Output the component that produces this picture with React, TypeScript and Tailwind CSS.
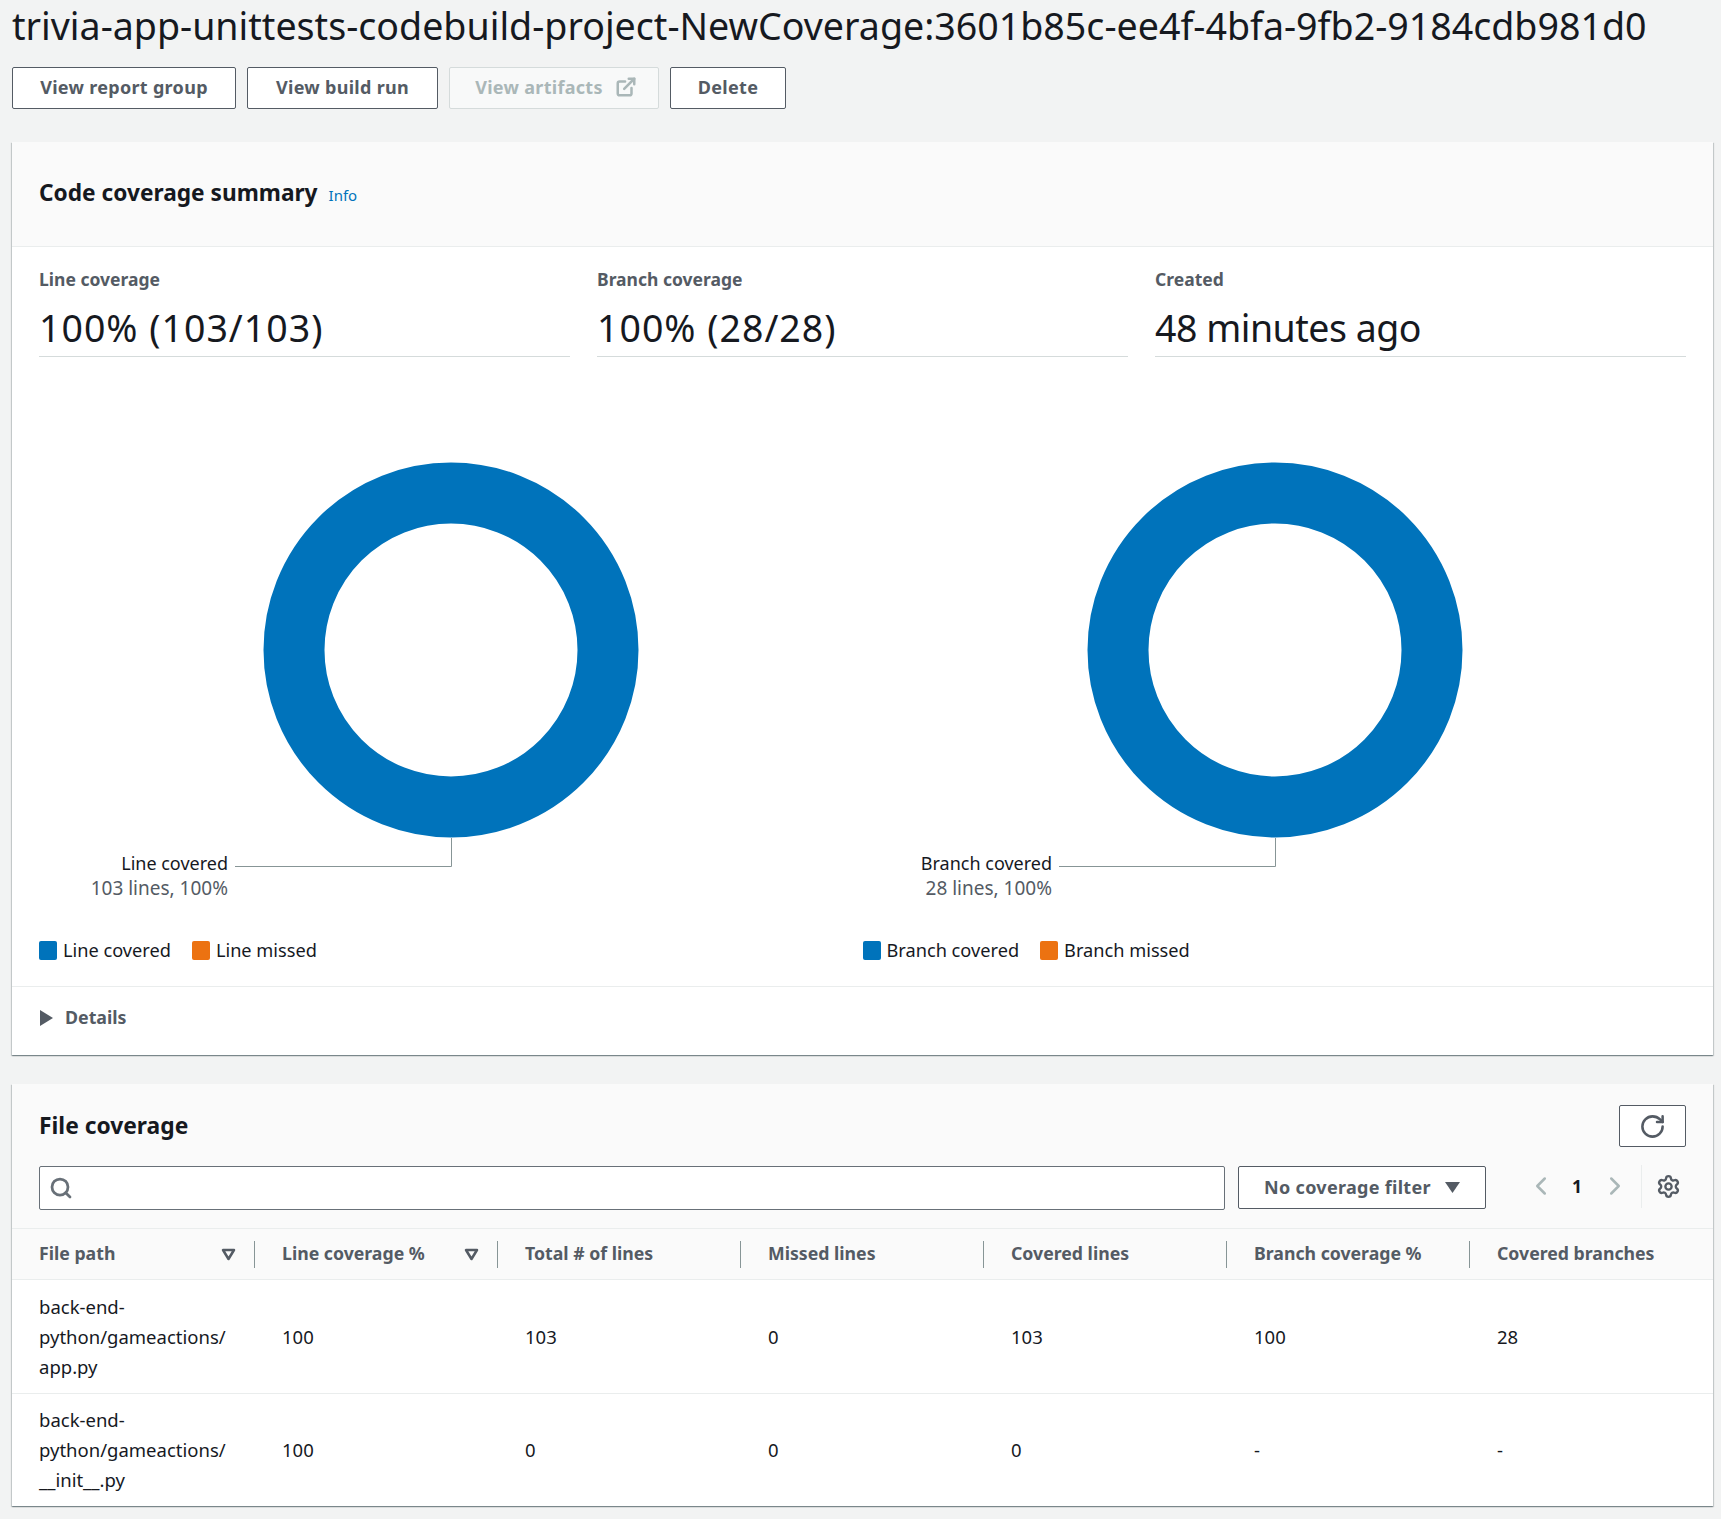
import { ExternalLink, RotateCw, Search, ChevronLeft, ChevronRight, Settings } from 'lucide-react'

function Button({ label, disabled, icon, className }: { label: string; disabled?: boolean; icon?: boolean; className?: string }) {
  return (
    <button
      className={`flex h-[42px] items-center justify-center gap-3 rounded-[2px] border pb-[2px] text-[18px] font-bold tracking-[0.3px] ${
        disabled ? 'border-[#d5dbdb] bg-[#f8f9f9] text-[#aab7b8]' : 'border-[#545b64] bg-white text-[#545b64]'
      } ${className}`}
    >
      {label}
      {icon && <ExternalLink size={22} strokeWidth={2.75} />}
    </button>
  )
}

function Stat({ label, value, className }: { label: string; value: string; className: string }) {
  return (
    <div className="border-b border-[#d5dbdb]">
      <div className="text-[17.5px] leading-[26px] font-bold text-[#545b64]">{label}</div>
      <div className={`mt-[12px] h-[52px] text-[37.5px] leading-[48px] text-[#16191f] ${className}`}>{value}</div>
    </div>
  )
}

function Donut({ label, detail }: { label: string; detail: string }) {
  return (
    <svg width="824" height="558" viewBox="0 0 824 558" className="block">
      <circle cx="412" cy="293" r="157" fill="none" stroke="#0073bb" strokeWidth="61" />
      <path d="M196 509.500H412.500V481" fill="none" stroke="#879596" strokeWidth="1" />
      <text x="189" y="513" textAnchor="end" fontSize="18" fill="#16191f">{label}</text>
      <text x="189" y="538" textAnchor="end" fontSize="19" fill="#545b64">{detail}</text>
    </svg>
  )
}

function Legend({ covered, missed }: { covered: string; missed: string }) {
  return (
    <div className="flex items-center gap-[21px] text-[18.200px] text-[#16191f]">
      <span className="flex items-center gap-[6px]">
        <span className="h-[19px] w-[18px] rounded-[2px] bg-[#0073bb]" />
        {covered}
      </span>
      <span className="flex items-center gap-[6px]">
        <span className="h-[19px] w-[18px] rounded-[2px] bg-[#ec7211]" />
        {missed}
      </span>
    </div>
  )
}

function FilterMark() {
  return (
    <svg width="15" height="13" viewBox="0 0 15 13" className="shrink-0">
      <path d="M2 2h11l-5.500 9z" fill="none" stroke="#545b64" strokeWidth="2.500" strokeLinejoin="round" />
    </svg>
  )
}

const headers = ['File path', 'Line coverage %', 'Total # of lines', 'Missed lines', 'Covered lines', 'Branch coverage %', 'Covered branches']

const rows = [
  { path: ['back-end-', 'python/gameactions/', 'app.py'], cells: ['100', '103', '0', '103', '100', '28'] },
  { path: ['back-end-', 'python/gameactions/', '__init__.py'], cells: ['100', '0', '0', '0', '-', '-'] },
]

export default function App() {
  return (
    <div className="h-[1519px] overflow-hidden bg-[#f2f3f3] px-[12px] font-['Noto_Sans',sans-serif] text-[#16191f]">
      <h1 className="h-[52px] text-[37.600px] leading-[52px] whitespace-nowrap">
        trivia-app-unittests-codebuild-project-NewCoverage:3601b85c-ee4f-4bfa-9fb2-9184cdb981d0
      </h1>

      <div className="mt-[15px] flex gap-[11px]">
        <Button label="View report group" className="w-[224px]" />
        <Button label="View build run" className="w-[191px]" />
        <Button label="View artifacts" disabled icon className="w-[210px] pl-[4px]" />
        <Button label="Delete" className="w-[116px]" />
      </div>

      {/* Summary card */}
      <section className="mt-[33px] w-[1701px] bg-white shadow-[0_1px_1px_0_rgba(0,28,36,0.3),1px_1px_1px_0_rgba(0,28,36,0.15),-1px_1px_1px_0_rgba(0,28,36,0.15)]">
        <header className="flex h-[105px] items-center gap-[11px] border-b border-[#eaeded] bg-[#fafafa] px-[27px] pb-[2px]">
          <h2 className="text-[22.700px] font-bold">Code coverage summary</h2>
          <a className="mt-[5px] text-[15px] text-[#0073bb]">Info</a>
        </header>

        <div className="grid grid-cols-3 gap-[27px] px-[27px] pt-[19px]">
          <Stat label="Line coverage" value="100% (103/103)" className="tracking-[1px]" />
          <Stat label="Branch coverage" value="100% (28/28)" className="tracking-[1px]" />
          <Stat label="Created" value="48 minutes ago" className="tracking-[-0.5px]" />
        </div>

        <div className="grid grid-cols-2 px-[27px]">
          <div>
            <Donut label="Line covered" detail="103 lines, 100%" />
            <div className="mt-[22px]">
              <Legend covered="Line covered" missed="Line missed" />
            </div>
          </div>
          <div>
            <Donut label="Branch covered" detail="28 lines, 100%" />
            <div className="mt-[22px]">
              <Legend covered="Branch covered" missed="Branch missed" />
            </div>
          </div>
        </div>

        <div className="mt-[22px] flex h-[69px] items-center gap-[12px] border-t border-[#eaeded] pr-[27px] pb-[8px] pl-[28px] text-[17.800px] font-bold text-[#545b64]">
          <svg width="13" height="16" viewBox="0 0 13 16" className="mt-[2px]"><path d="M0 0l13 8L0 16z" fill="#545b64" /></svg>
          Details
        </div>
      </section>

      {/* File coverage card */}
      <section className="mt-[29px] w-[1701px] bg-white shadow-[0_1px_1px_0_rgba(0,28,36,0.3),1px_1px_1px_0_rgba(0,28,36,0.15),-1px_1px_1px_0_rgba(0,28,36,0.15)]">
        <div className="bg-[#fafafa] px-[27px] pt-[21px]">
          <div className="flex h-[42px] items-center justify-between">
            <h2 className="text-[22.800px] font-bold">File coverage</h2>
            <button className="flex h-[42px] w-[67px] items-center justify-center rounded-[2px] border border-[#545b64] bg-white text-[#545b64]">
              <RotateCw size={27} strokeWidth={2.25} />
            </button>
          </div>
          <div className="mt-[19px] flex h-[62px] items-start">
            <div className="flex h-[44px] w-[1186px] items-center rounded-[2px] border border-[#687078] bg-white pl-[9px] text-[#687078]">
              <Search size={24} strokeWidth={2.75} />
            </div>
            <button className="ml-[13px] flex h-[43px] w-[248px] items-center justify-center gap-[14px] rounded-[2px] border border-[#545b64] bg-white text-[18px] font-bold tracking-[0.3px] text-[#545b64]">
              No coverage filter
              <svg width="15" height="11" viewBox="0 0 15 11"><path d="M0 0h15L7.500 11z" fill="#545b64" /></svg>
            </button>
            <div className="ml-[40px] flex h-[40px] items-center text-[#aab7b8]">
              <ChevronLeft size={30} strokeWidth={2} />
              <span className="mr-[18px] ml-[16px] w-[10px] text-center text-[17.500px] font-bold text-[#16191f]">1</span>
              <ChevronRight size={30} strokeWidth={2} />
              <span className="ml-[11px] h-[43px] shrink-0 border-l border-[#eaeded]" />
              <Settings size={25} strokeWidth={2.25} className="ml-[14px] text-[#545b64]" />
            </div>
          </div>
        </div>

        <table className="w-full table-fixed border-collapse text-[18.500px]">
          <thead>
            <tr className="h-[51px] border-y border-[#eaeded] bg-[#fafafa] text-left text-[17.700px] text-[#545b64]">
              {headers.map((h, i) => (
                <th key={h} className="p-0 font-bold">
                  <div className={`flex h-[27px] items-center justify-between pr-[18px] pl-[27px] ${i < 6 ? 'border-r border-[#879596]' : ''}`}>
                    <span className="mb-[2px] whitespace-nowrap">{h}</span>
                    {i < 2 && <FilterMark />}
                  </div>
                </th>
              ))}
            </tr>
          </thead>
          <tbody>
            {rows.map((row, r) => (
              <tr key={r} className={r === 0 ? 'h-[114px] border-b border-[#eaeded]' : 'h-[112px]'}>
                <td className="py-0 pl-[27px] leading-[30px]">
                  {row.path.map((part) => <div key={part}>{part}</div>)}
                </td>
                {row.cells.map((c, i) => (
                  <td key={i} className="py-0 pl-[27px]">{c}</td>
                ))}
              </tr>
            ))}
          </tbody>
        </table>
      </section>
    </div>
  )
}
